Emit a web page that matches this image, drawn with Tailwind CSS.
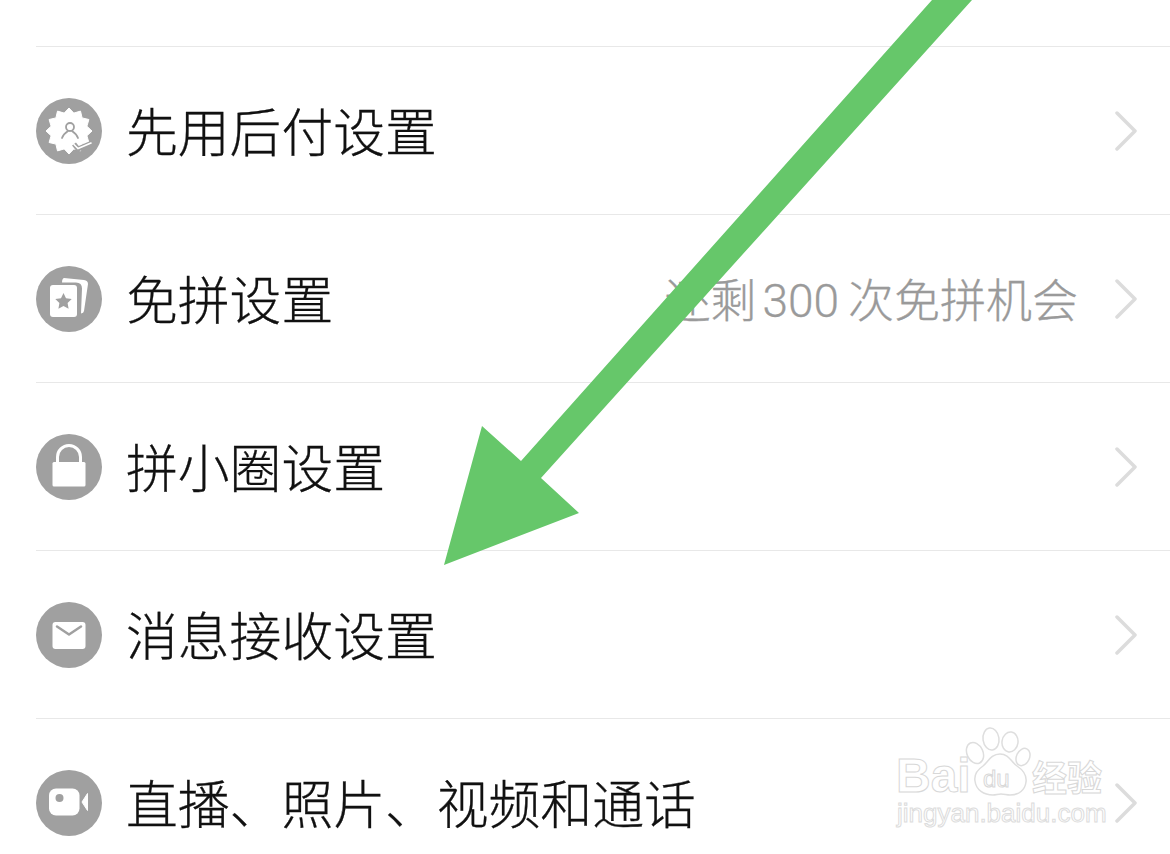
<!DOCTYPE html>
<html lang="zh-CN">
<head>
  <meta charset="UTF-8" />
  <meta name="viewport" content="width=device-width, initial-scale=1.0"/>
  <title>设置</title>
  <script src="https://cdn.jsdelivr.net/npm/@tailwindcss/browser@4"></script>
</head>
<body class="bg-white overflow-hidden font-['Noto_Sans_CJK_SC','Noto_Sans',sans-serif]">

  <div class="relative w-[1170px] h-[854px] overflow-hidden">
    <div class="pl-9">
      <div class="h-[47px] border-b border-[#e8e8e8]"></div>

      <!-- 先用后付设置 -->
      <div class="h-[168px] flex items-center border-b border-[#e8e8e8]">
        <div class="w-[66px] h-[66px] rounded-full bg-[#a0a0a0] shrink-0 flex items-center justify-center">
          <svg width="66" height="66" viewBox="0 0 66 66">
            <path fill="#fff" stroke="#fff" stroke-width="1" stroke-linejoin="round" d="M33 10L37.800 15.100 44.500 13.100 46.100 19.900 52.900 21.500 50.900 28.200 56 33 50.900 37.800 52.900 44.500 46.100 46.100 44.500 52.900 37.800 50.900 33 56 28.200 50.900 21.500 52.900 19.900 46.100 13.100 44.500 15.100 37.800 10 33 15.100 28.200 13.100 21.500 19.900 19.900 21.500 13.100 28.200 15.100z"/>
            <circle cx="34" cy="29" r="4" fill="none" stroke="#a0a0a0" stroke-width="1.800"/>
            <path d="M26 40c1-3 3-5 6-7M42 40c-1-3-3-5-6-7" fill="none" stroke="#a0a0a0" stroke-width="1.800" stroke-linecap="round"/>
            <path d="M38 46l4 5 14-6" fill="none" stroke="#a0a0a0" stroke-width="5"/>
            <path d="M38 46.500l4 4 13-5.500" fill="none" stroke="#fff" stroke-width="1.600" stroke-linecap="round"/>
          </svg>
        </div>
        <span class="ml-[24px] -mt-[2px] text-[51.8px] leading-none font-light text-[#111] [-webkit-text-stroke:0.3px_#111]">先用后付设置</span>
        <svg class="ml-auto mr-[33px]" width="22" height="40" viewBox="0 0 22 40"><path d="M2 2l18 18L2 38" fill="none" stroke="#dcdcdc" stroke-width="3.5" stroke-linecap="round" stroke-linejoin="round"/></svg>
      </div>

      <!-- 免拼设置 -->
      <div class="h-[168px] flex items-center border-b border-[#e8e8e8]">
        <div class="w-[66px] h-[66px] rounded-full bg-[#a0a0a0] shrink-0 flex items-center justify-center">
          <svg width="66" height="66" viewBox="0 0 66 66">
            <path fill="#fff" d="M28 12l20 2q4 .5 4 4l-4 27q-.3 2-3 2.500l1-25q0-6-6-6H26q0-4 2-4.500z"/>
            <rect x="14" y="19" width="27" height="32" rx="3" fill="#fff"/>
            <path fill="#a0a0a0" d="M27.500 27l2.500 5.200 5.700.8-4.100 4 1 5.700-5.100-2.700-5.100 2.700 1-5.700-4.100-4 5.700-.8z"/>
          </svg>
        </div>
        <span class="ml-[24px] -mt-[2px] text-[51.8px] leading-none font-light text-[#111] [-webkit-text-stroke:0.3px_#111]">免拼设置</span>
        <span class="ml-auto text-[46px] leading-none font-light text-[#9a9a9a] [-webkit-text-stroke:0.3px_#9a9a9a]">还剩<span class="ml-[6px] mr-[9px] font-['Roboto',sans-serif] font-light">300</span>次免拼机会</span>
        <svg class="ml-[37px] mr-[33px]" width="22" height="40" viewBox="0 0 22 40"><path d="M2 2l18 18L2 38" fill="none" stroke="#dcdcdc" stroke-width="3.5" stroke-linecap="round" stroke-linejoin="round"/></svg>
      </div>

      <!-- 拼小圈设置 -->
      <div class="h-[168px] flex items-center border-b border-[#e8e8e8]">
        <div class="w-[66px] h-[66px] rounded-full bg-[#a0a0a0] shrink-0 flex items-center justify-center">
          <svg width="66" height="66" viewBox="0 0 66 66">
            <path d="M21.500 30v-7a11.500 11.500 0 0 1 23 0v7" fill="none" stroke="#fff" stroke-width="3"/>
            <rect x="16.500" y="28" width="33" height="24.500" rx="1.500" fill="#fff"/>
          </svg>
        </div>
        <span class="ml-[24px] -mt-[2px] text-[51.8px] leading-none font-light text-[#111] [-webkit-text-stroke:0.3px_#111]">拼小圈设置</span>
        <svg class="ml-auto mr-[33px]" width="22" height="40" viewBox="0 0 22 40"><path d="M2 2l18 18L2 38" fill="none" stroke="#dcdcdc" stroke-width="3.5" stroke-linecap="round" stroke-linejoin="round"/></svg>
      </div>

      <!-- 消息接收设置 -->
      <div class="h-[168px] flex items-center border-b border-[#e8e8e8]">
        <div class="w-[66px] h-[66px] rounded-full bg-[#a0a0a0] shrink-0 flex items-center justify-center">
          <svg width="66" height="66" viewBox="0 0 66 66">
            <rect x="16.500" y="20" width="33" height="27" rx="3" fill="#fff"/>
            <path d="M21 24.500l12 8 12-8" fill="none" stroke="#a0a0a0" stroke-width="2.500" stroke-linecap="round" stroke-linejoin="round"/>
          </svg>
        </div>
        <span class="ml-[24px] -mt-[2px] text-[51.8px] leading-none font-light text-[#111] [-webkit-text-stroke:0.3px_#111]">消息接收设置</span>
        <svg class="ml-auto mr-[33px]" width="22" height="40" viewBox="0 0 22 40"><path d="M2 2l18 18L2 38" fill="none" stroke="#dcdcdc" stroke-width="3.5" stroke-linecap="round" stroke-linejoin="round"/></svg>
      </div>

      <!-- 直播、照片、视频和通话 -->
      <div class="h-[168px] flex items-center">
        <div class="w-[66px] h-[66px] rounded-full bg-[#a0a0a0] shrink-0 flex items-center justify-center">
          <svg width="66" height="66" viewBox="0 0 66 66">
            <rect x="13" y="18.500" width="30.500" height="27" rx="7" fill="#fff"/>
            <circle cx="23.500" cy="28" r="4" fill="#a0a0a0"/>
            <path fill="#fff" stroke="#fff" stroke-linejoin="round" d="M46 32l5.500-8.500v17z"/>
          </svg>
        </div>
        <span class="ml-[24px] -mt-[2px] text-[51.8px] leading-none font-light text-[#111] [-webkit-text-stroke:0.3px_#111]">直播、照片、视频和通话</span>
        <svg class="ml-auto mr-[33px]" width="22" height="40" viewBox="0 0 22 40"><path d="M2 2l18 18L2 38" fill="none" stroke="#dcdcdc" stroke-width="3.5" stroke-linecap="round" stroke-linejoin="round"/></svg>
      </div>
    </div>

    <!-- 绿色箭头 -->
    <svg class="absolute left-0 top-0 pointer-events-none" width="1170" height="854" viewBox="0 0 1170 854">
      <path fill="#66c76a" d="M444 565L482 426L521 461L932 0H972L541 478L579 513z"/>
    </svg>

    <!-- 水印 -->
    <div class="absolute left-[895px] top-[726px] w-[215px] h-[110px] pointer-events-none">
      <svg class="absolute left-0 top-0" width="215" height="110" viewBox="0 0 215 110">
        <g fill="#fff" stroke="#dedede" stroke-width="1.500">
          <ellipse cx="80" cy="27" rx="8" ry="11" transform="rotate(-25 80 27)"/>
          <ellipse cx="96" cy="13" rx="8" ry="11" transform="rotate(-8 96 13)"/>
          <ellipse cx="115" cy="16" rx="8" ry="10" transform="rotate(8 115 16)"/>
          <ellipse cx="128" cy="31" rx="6.500" ry="9" transform="rotate(25 128 31)"/>
          <path d="M105 28c-9 0-12 8-17 12-6 4-9 9-8 15 1 9 9 14 18 14 3 0 5-1 8-1s6 1 9 1c9 0 15-5 16-13 1-7-3-12-9-16-6-4-8-12-17-12z"/>
        </g>
      </svg>
      <span class="absolute left-[1px] top-[26px] text-[48px] leading-none font-bold font-['Liberation_Sans',sans-serif] text-white [-webkit-text-stroke:1px_#d8d8d8]">Bai</span>
      <span class="absolute left-[88px] top-[41px] text-[24px] leading-none font-['Liberation_Sans',sans-serif] text-white [-webkit-text-stroke:1px_#d8d8d8]">du</span>
      <span class="absolute left-[137px] top-[32px] text-[35px] leading-none font-bold text-white [-webkit-text-stroke:1px_#d8d8d8]">经验</span>
      <span class="absolute left-[2px] top-[74px] text-[26px] leading-none font-['Liberation_Sans',sans-serif] text-white [-webkit-text-stroke:1px_#dcdcdc]">jingyan.baidu.com</span>
    </div>
  </div>

</body>
</html>
